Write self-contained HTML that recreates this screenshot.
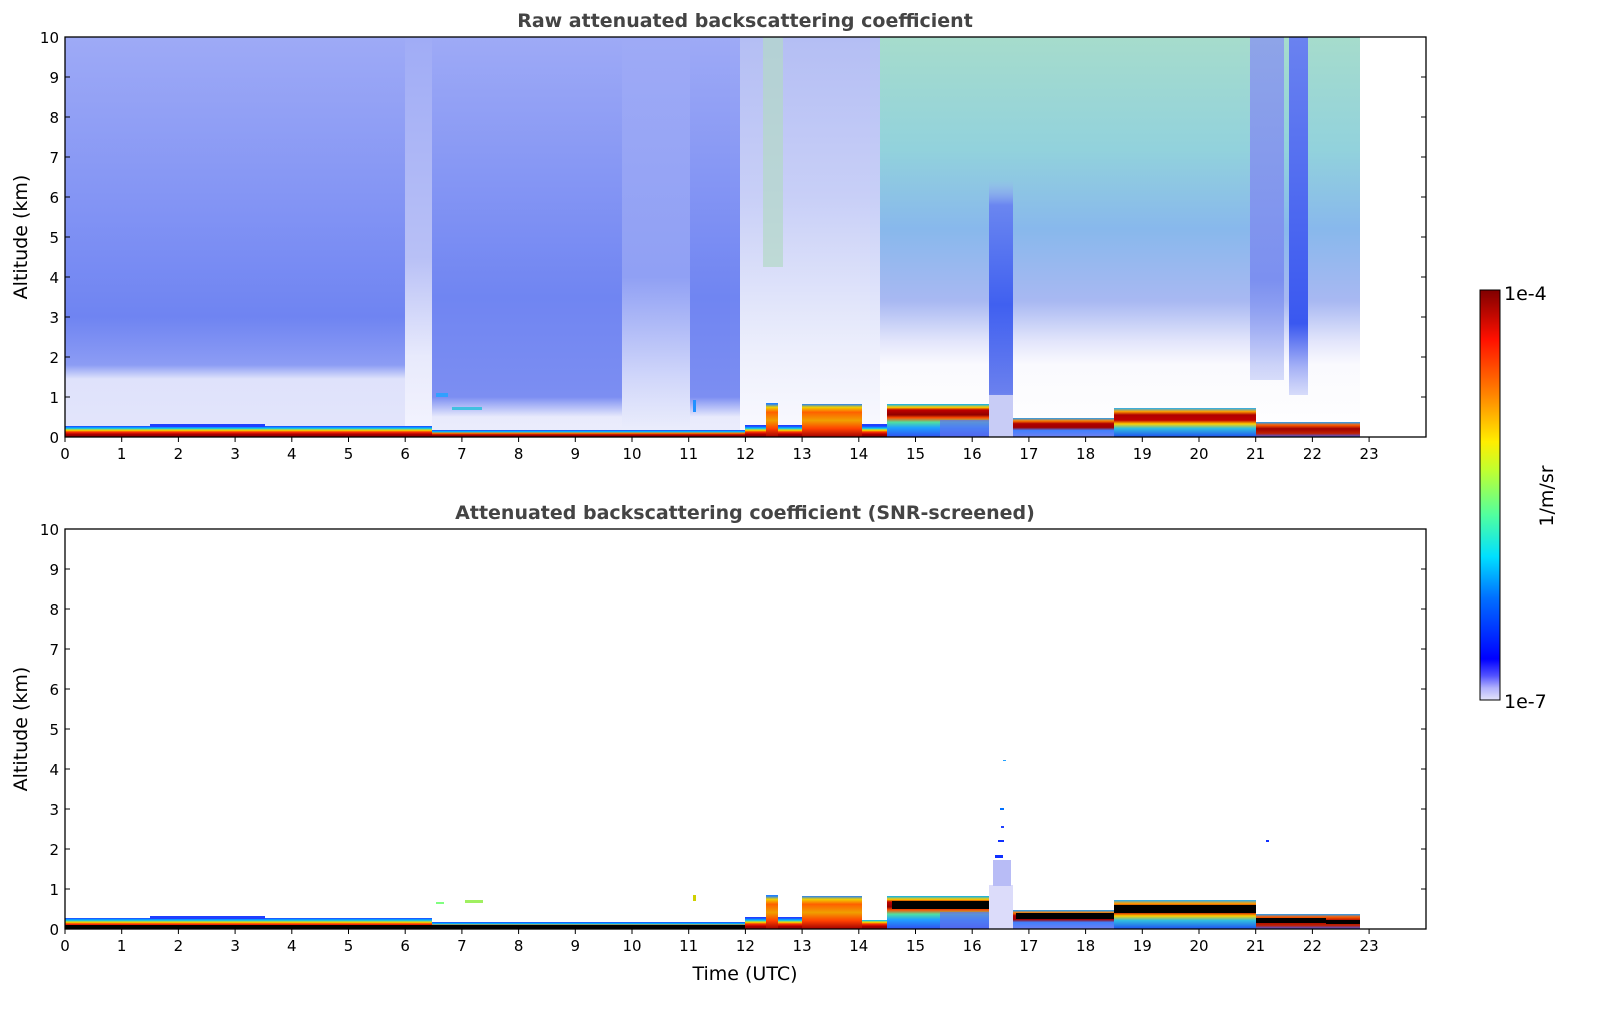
<!DOCTYPE html>
<html><head><meta charset="utf-8"><style>html,body{margin:0;padding:0;background:#fff}svg{display:block}</style></head><body>
<svg width="1606" height="1020" viewBox="0 0 1606 1020" xmlns="http://www.w3.org/2000/svg" font-family="DejaVu Sans, Liberation Sans, sans-serif">
<defs>
<linearGradient id="gA" gradientUnits="userSpaceOnUse" x1="0" y1="37" x2="0" y2="437">
<stop offset="0" stop-color="#9eaaf6"/><stop offset="0.4" stop-color="#8495f4"/><stop offset="0.7" stop-color="#6f84f2"/><stop offset="0.82" stop-color="#8c9cf4"/><stop offset="0.855" stop-color="#dfe2fb"/><stop offset="1" stop-color="#e3e5fb"/></linearGradient>
<linearGradient id="gB" gradientUnits="userSpaceOnUse" x1="0" y1="37" x2="0" y2="437">
<stop offset="0" stop-color="#a0acf6"/><stop offset="0.55" stop-color="#b8c0f6"/><stop offset="0.8" stop-color="#e8eafc"/><stop offset="1" stop-color="#f4f4fe"/></linearGradient>
<linearGradient id="gC" gradientUnits="userSpaceOnUse" x1="0" y1="37" x2="0" y2="437">
<stop offset="0" stop-color="#9eaaf6"/><stop offset="0.65" stop-color="#7085f2"/><stop offset="0.9" stop-color="#7c8ef2"/><stop offset="0.95" stop-color="#e8eafc"/><stop offset="1" stop-color="#eceefc"/></linearGradient>
<linearGradient id="gD" gradientUnits="userSpaceOnUse" x1="0" y1="37" x2="0" y2="437">
<stop offset="0" stop-color="#9eaaf6"/><stop offset="0.6" stop-color="#90a0f4"/><stop offset="0.85" stop-color="#d0d6fa"/><stop offset="1" stop-color="#eef0fc"/></linearGradient>
<linearGradient id="gE" gradientUnits="userSpaceOnUse" x1="0" y1="37" x2="0" y2="437">
<stop offset="0" stop-color="#b4bef4"/><stop offset="0.4" stop-color="#c8cff7"/><stop offset="0.8" stop-color="#eef0fc"/><stop offset="1" stop-color="#fafaff"/></linearGradient>
<linearGradient id="gF" gradientUnits="userSpaceOnUse" x1="0" y1="37" x2="0" y2="437">
<stop offset="0" stop-color="#a6dccc"/><stop offset="0.28" stop-color="#92d2dc"/><stop offset="0.48" stop-color="#88b8ec"/><stop offset="0.66" stop-color="#a8b8f2"/><stop offset="0.76" stop-color="#e2e5fb"/><stop offset="0.82" stop-color="#fafafe"/><stop offset="1" stop-color="#ffffff"/></linearGradient>
<linearGradient id="gG" gradientUnits="userSpaceOnUse" x1="0" y1="180" x2="0" y2="430">
<stop offset="0" stop-color="#a0b0f4" stop-opacity="0"/><stop offset="0.1" stop-color="#6a86f0"/><stop offset="0.5" stop-color="#4060f0"/><stop offset="0.85" stop-color="#6a80ee"/><stop offset="1" stop-color="#c8ccf8"/></linearGradient>
<linearGradient id="gH" gradientUnits="userSpaceOnUse" x1="0" y1="37" x2="0" y2="395">
<stop offset="0" stop-color="#6a82f0"/><stop offset="0.8" stop-color="#3a58f0"/><stop offset="1" stop-color="#8090f0" stop-opacity="0.3"/></linearGradient>
<linearGradient id="gI" gradientUnits="userSpaceOnUse" x1="0" y1="37" x2="0" y2="385">
<stop offset="0" stop-color="#8ea4e8"/><stop offset="0.7" stop-color="#7c90f0"/><stop offset="1" stop-color="#a8b4f4" stop-opacity="0.4"/></linearGradient>
<linearGradient id="gBL" gradientUnits="userSpaceOnUse" x1="0" y1="426" x2="0" y2="437">
<stop offset="0" stop-color="#2040ff"/><stop offset="0.2" stop-color="#00c0ff"/><stop offset="0.38" stop-color="#f0e000"/><stop offset="0.55" stop-color="#ff3000"/><stop offset="0.75" stop-color="#b00000"/><stop offset="1" stop-color="#800000"/></linearGradient>
<linearGradient id="gBL2" gradientUnits="userSpaceOnUse" x1="0" y1="430" x2="0" y2="437">
<stop offset="0" stop-color="#2040ff"/><stop offset="0.25" stop-color="#00c0ff"/><stop offset="0.45" stop-color="#ff8000"/><stop offset="0.7" stop-color="#b00000"/><stop offset="1" stop-color="#800000"/></linearGradient>
<linearGradient id="g13" gradientUnits="userSpaceOnUse" x1="0" y1="404" x2="0" y2="437">
<stop offset="0" stop-color="#2080ff"/><stop offset="0.1" stop-color="#f0d000"/><stop offset="0.25" stop-color="#ff6000"/><stop offset="0.5" stop-color="#f0a000"/><stop offset="0.75" stop-color="#ff4000"/><stop offset="1" stop-color="#a00000"/></linearGradient>
<linearGradient id="g15" gradientUnits="userSpaceOnUse" x1="0" y1="404" x2="0" y2="437">
<stop offset="0" stop-color="#00b0ff"/><stop offset="0.1" stop-color="#ffd000"/><stop offset="0.18" stop-color="#c00000"/><stop offset="0.33" stop-color="#900000"/><stop offset="0.42" stop-color="#ff5000"/><stop offset="0.55" stop-color="#50e0a0"/><stop offset="0.72" stop-color="#20a0ff"/><stop offset="1" stop-color="#3050f0"/></linearGradient>
<linearGradient id="g17" gradientUnits="userSpaceOnUse" x1="0" y1="418" x2="0" y2="437">
<stop offset="0" stop-color="#20a0ff"/><stop offset="0.15" stop-color="#ff8000"/><stop offset="0.3" stop-color="#b00000"/><stop offset="0.5" stop-color="#a00000"/><stop offset="0.65" stop-color="#4080ff"/><stop offset="1" stop-color="#7080f0"/></linearGradient>
<linearGradient id="g19" gradientUnits="userSpaceOnUse" x1="0" y1="408" x2="0" y2="437">
<stop offset="0" stop-color="#20b0ff"/><stop offset="0.12" stop-color="#ffa000"/><stop offset="0.24" stop-color="#b00000"/><stop offset="0.42" stop-color="#c00000"/><stop offset="0.55" stop-color="#ffd000"/><stop offset="0.7" stop-color="#30c0e0"/><stop offset="1" stop-color="#2050f0"/></linearGradient>
<linearGradient id="g21" gradientUnits="userSpaceOnUse" x1="0" y1="422" x2="0" y2="437">
<stop offset="0" stop-color="#20a0ff"/><stop offset="0.2" stop-color="#ff6000"/><stop offset="0.45" stop-color="#a00000"/><stop offset="0.75" stop-color="#c02000"/><stop offset="1" stop-color="#4060ff"/></linearGradient>
<linearGradient id="gCB" x1="0" y1="1" x2="0" y2="0">
<stop offset="0" stop-color="#e4e4fa"/><stop offset="0.03" stop-color="#b0b0fc"/><stop offset="0.06" stop-color="#5050ff"/><stop offset="0.1" stop-color="#0000ff"/><stop offset="0.25" stop-color="#0070ff"/><stop offset="0.35" stop-color="#00e0ff"/><stop offset="0.45" stop-color="#50ffa0"/><stop offset="0.56" stop-color="#c0ff30"/><stop offset="0.63" stop-color="#ffee00"/><stop offset="0.75" stop-color="#ff8000"/><stop offset="0.88" stop-color="#ff1000"/><stop offset="1" stop-color="#800000"/></linearGradient>
</defs>

<!-- TOP PLOT DATA -->
<rect x="65" y="37" width="340" height="400" fill="url(#gA)"/>
<rect x="405" y="37" width="27" height="400" fill="url(#gB)"/>
<rect x="432" y="37" width="190" height="400" fill="url(#gC)"/>
<rect x="622" y="37" width="68" height="400" fill="url(#gD)"/>
<rect x="690" y="37" width="50" height="400" fill="url(#gC)"/>
<rect x="740" y="37" width="140" height="400" fill="url(#gE)"/>
<rect x="763" y="37" width="20" height="230" fill="#b4d8c8" opacity="0.7"/>
<rect x="880" y="37" width="480" height="400" fill="url(#gF)"/>
<rect x="989" y="180" width="24" height="250" fill="url(#gG)"/>
<rect x="1250" y="37" width="34" height="343" fill="url(#gI)"/>
<rect x="1289" y="37" width="19" height="358" fill="url(#gH)"/>
<rect x="436" y="393" width="12" height="4" fill="#30a0ff"/>
<rect x="452" y="407" width="30" height="3" fill="#40c0e0"/>
<rect x="693" y="400" width="3" height="12" fill="#2090ff"/>

<!-- boundary layer top -->
<rect x="65" y="426" width="367" height="11" fill="url(#gBL)"/>
<rect x="150" y="424" width="115" height="3" fill="#2040ff"/>
<rect x="432" y="430" width="313" height="7" fill="url(#gBL2)"/>
<rect x="745" y="425" width="57" height="12" fill="url(#gBL)"/>
<rect x="766" y="403" width="12" height="34" fill="url(#g13)"/>
<rect x="802" y="404" width="60" height="33" fill="url(#g13)"/>
<rect x="862" y="424" width="25" height="13" fill="url(#gBL)"/>
<rect x="887" y="404" width="102" height="33" fill="url(#g15)"/>
<rect x="940" y="420" width="49" height="17" fill="#6070f0" opacity="0.7"/>
<rect x="989" y="395" width="24" height="42" fill="#c8ccf6"/>
<rect x="1013" y="418" width="101" height="19" fill="url(#g17)"/>
<rect x="1114" y="408" width="142" height="29" fill="url(#g19)"/>
<rect x="1256" y="422" width="104" height="15" fill="url(#g21)"/>

<!-- BOTTOM PLOT DATA -->
<g transform="translate(0,492)">
<rect x="65" y="426" width="367" height="11" fill="url(#gBL)"/>
<rect x="150" y="424" width="115" height="3" fill="#2040ff"/>
<rect x="432" y="430" width="313" height="7" fill="url(#gBL2)"/>
<rect x="745" y="425" width="57" height="12" fill="url(#gBL)"/>
<rect x="766" y="403" width="12" height="34" fill="url(#g13)"/>
<rect x="802" y="404" width="60" height="33" fill="url(#g13)"/>
<rect x="862" y="428" width="25" height="9" fill="url(#gBL)"/>
<rect x="887" y="404" width="102" height="33" fill="url(#g15)"/>
<rect x="940" y="420" width="49" height="17" fill="#6070f0" opacity="0.7"/>
<rect x="989" y="395" width="24" height="42" fill="#dcdcfa"/>
<rect x="1013" y="418" width="101" height="19" fill="url(#g17)"/>
<rect x="1114" y="408" width="142" height="29" fill="url(#g19)"/>
<rect x="1256" y="422" width="104" height="15" fill="url(#g21)"/>
<rect x="65" y="433" width="680" height="4" fill="#000"/>
<rect x="892" y="409" width="97" height="8" fill="#000"/>
<rect x="1016" y="421" width="98" height="6" fill="#000"/>
<rect x="1114" y="413" width="142" height="8" fill="#000"/>
<rect x="1256" y="426" width="70" height="5" fill="#000"/>
<rect x="1326" y="428" width="34" height="4" fill="#000"/>
</g>
<rect x="989" y="885" width="24" height="22" fill="#dcdcfa"/>
<rect x="993" y="860" width="18" height="26" fill="#b8bcf6"/>
<rect x="1000" y="808" width="4" height="2" fill="#0070ff"/>
<rect x="1001" y="826" width="3" height="2" fill="#2040ff"/>
<rect x="998" y="840" width="6" height="2" fill="#1030ff"/>
<rect x="995" y="855" width="8" height="3" fill="#1030ff"/>
<rect x="1003" y="760" width="3" height="1" fill="#20a0ff"/>
<rect x="1266" y="840" width="3" height="2" fill="#1030ff"/>
<rect x="436" y="902" width="8" height="2" fill="#80ff80"/>
<rect x="465" y="900" width="18" height="3" fill="#a0f060"/>
<rect x="693" y="895" width="3" height="6" fill="#d0d000"/>

<!-- AXES -->
<g fill="none" stroke="#000" stroke-width="1.3">
<rect x="65" y="37" width="1361" height="400"/>
<rect x="65" y="529" width="1361" height="400"/>
</g>
<g stroke="#000" stroke-width="1">
<path d="M65 437h5M65 397h5M65 357h5M65 317h5M65 277h5M65 237h5M65 197h5M65 157h5M65 117h5M65 77h5M65 37h5M1426 437h-5M1426 397h-5M1426 357h-5M1426 317h-5M1426 277h-5M1426 237h-5M1426 197h-5M1426 157h-5M1426 117h-5M1426 77h-5M1426 37h-5"/>
<path d="M65 929h5M65 889h5M65 849h5M65 809h5M65 769h5M65 729h5M65 689h5M65 649h5M65 609h5M65 569h5M65 529h5M1426 929h-5M1426 889h-5M1426 849h-5M1426 809h-5M1426 769h-5M1426 729h-5M1426 689h-5M1426 649h-5M1426 609h-5M1426 569h-5M1426 529h-5"/>
<path d="M65 437v5M121.7 437v5M178.4 437v5M235.1 437v5M291.8 437v5M348.5 437v5M405.2 437v5M461.9 437v5M518.6 437v5M575.3 437v5M632 437v5M688.7 437v5M745.4 437v5M802.1 437v5M858.8 437v5M915.5 437v5M972.2 437v5M1028.9 437v5M1085.6 437v5M1142.3 437v5M1199 437v5M1255.7 437v5M1312.4 437v5M1369.1 437v5"/>
<path d="M65 929v5M121.7 929v5M178.4 929v5M235.1 929v5M291.8 929v5M348.5 929v5M405.2 929v5M461.9 929v5M518.6 929v5M575.3 929v5M632 929v5M688.7 929v5M745.4 929v5M802.1 929v5M858.8 929v5M915.5 929v5M972.2 929v5M1028.9 929v5M1085.6 929v5M1142.3 929v5M1199 929v5M1255.7 929v5M1312.4 929v5M1369.1 929v5"/>
</g>

<g font-size="15" fill="#000" text-anchor="end">
<text x="59" y="443">0</text><text x="59" y="403">1</text><text x="59" y="363">2</text><text x="59" y="323">3</text><text x="59" y="283">4</text><text x="59" y="243">5</text><text x="59" y="203">6</text><text x="59" y="163">7</text><text x="59" y="123">8</text><text x="59" y="83">9</text><text x="59" y="43">10</text>
<text x="59" y="935">0</text><text x="59" y="895">1</text><text x="59" y="855">2</text><text x="59" y="815">3</text><text x="59" y="775">4</text><text x="59" y="735">5</text><text x="59" y="695">6</text><text x="59" y="655">7</text><text x="59" y="615">8</text><text x="59" y="575">9</text><text x="59" y="535">10</text>
</g>
<g font-size="15" fill="#000" text-anchor="middle">
<text x="65" y="459">0</text><text x="121.7" y="459">1</text><text x="178.4" y="459">2</text><text x="235.1" y="459">3</text><text x="291.8" y="459">4</text><text x="348.5" y="459">5</text><text x="405.2" y="459">6</text><text x="461.9" y="459">7</text><text x="518.6" y="459">8</text><text x="575.3" y="459">9</text><text x="632" y="459">10</text><text x="688.7" y="459">11</text><text x="745.4" y="459">12</text><text x="802.1" y="459">13</text><text x="858.8" y="459">14</text><text x="915.5" y="459">15</text><text x="972.2" y="459">16</text><text x="1028.9" y="459">17</text><text x="1085.6" y="459">18</text><text x="1142.3" y="459">19</text><text x="1199" y="459">20</text><text x="1255.7" y="459">21</text><text x="1312.4" y="459">22</text><text x="1369.1" y="459">23</text>
<text x="65" y="951">0</text><text x="121.7" y="951">1</text><text x="178.4" y="951">2</text><text x="235.1" y="951">3</text><text x="291.8" y="951">4</text><text x="348.5" y="951">5</text><text x="405.2" y="951">6</text><text x="461.9" y="951">7</text><text x="518.6" y="951">8</text><text x="575.3" y="951">9</text><text x="632" y="951">10</text><text x="688.7" y="951">11</text><text x="745.4" y="951">12</text><text x="802.1" y="951">13</text><text x="858.8" y="951">14</text><text x="915.5" y="951">15</text><text x="972.2" y="951">16</text><text x="1028.9" y="951">17</text><text x="1085.6" y="951">18</text><text x="1142.3" y="951">19</text><text x="1199" y="951">20</text><text x="1255.7" y="951">21</text><text x="1312.4" y="951">22</text><text x="1369.1" y="951">23</text>
</g>

<g font-size="19" font-weight="bold" fill="#444" text-anchor="middle">
<text x="745" y="27">Raw attenuated backscattering coefficient</text>
<text x="745" y="519">Attenuated backscattering coefficient (SNR-screened)</text>
</g>
<g font-size="19" fill="#000" text-anchor="middle">
<text transform="translate(27,237) rotate(-90)">Altitude (km)</text>
<text transform="translate(27,729) rotate(-90)">Altitude (km)</text>
<text x="745" y="980">Time (UTC)</text>
</g>

<rect x="1480" y="290" width="20" height="410" fill="url(#gCB)" stroke="#000" stroke-width="1"/>
<g font-size="19" fill="#000">
<text x="1504" y="300">1e-4</text>
<text x="1504" y="708">1e-7</text>
<text transform="translate(1553,496) rotate(-90)" text-anchor="middle">1/m/sr</text>
</g>
</svg>
</body></html>
